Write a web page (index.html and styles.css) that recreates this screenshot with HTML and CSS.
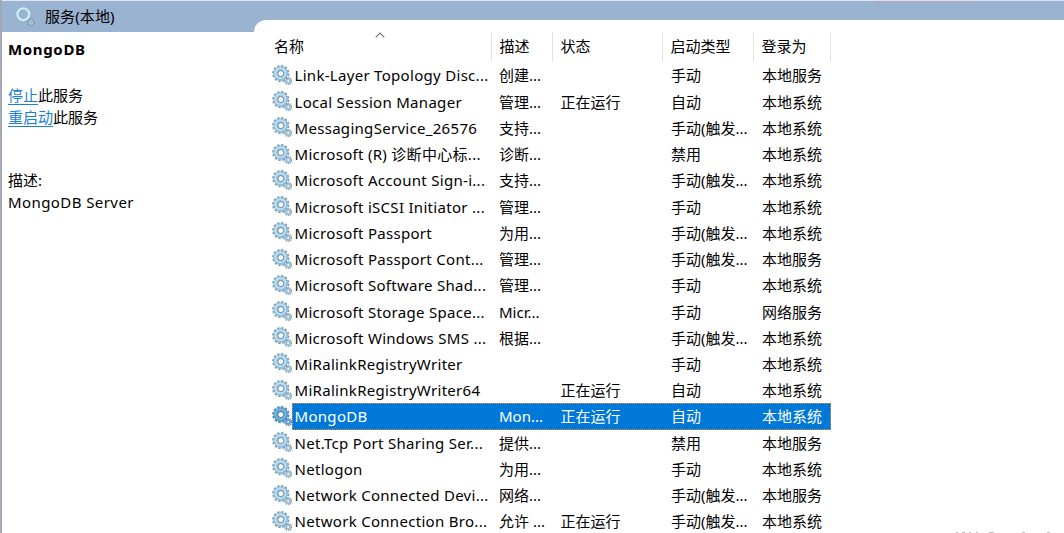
FILE: index.html
```html
<!DOCTYPE html>
<html lang="zh-CN">
<head>
<meta charset="UTF-8">
<meta name="viewport" content="width=device-width, initial-scale=1.0">
<title>服务</title>
<link rel="stylesheet" href="styles.css">
</head>
<body>
<svg class="defs" width="0" height="0">
  <symbol id="gear" viewBox="0 0 20 20">
    <circle class="teeth" cx="8.8" cy="8.6" r="7.6" fill="none" stroke-width="2" stroke-dasharray="2.4 1.58"/>
    <circle class="ring" cx="8.8" cy="8.6" r="5.2" fill="none" stroke-width="4.2"/>
    <circle class="shine" cx="8.4" cy="8.2" r="5" fill="none" stroke-width="1.6"/>
    <circle class="edge" cx="8.8" cy="8.6" r="3" fill="none" stroke-width="1"/>
    <circle class="teeth" cx="16.2" cy="16" r="3.3" fill="none" stroke-width="1.6" stroke-dasharray="1.3 0.77"/>
    <circle class="small" cx="16.2" cy="16" r="1.8" fill="none" stroke-width="1.8"/>
  </symbol>
</svg>

<div class="window">
  <div class="title-bar">
    <svg class="title-icon" viewBox="0 0 20 20">
      <circle cx="8.5" cy="7.5" r="6" fill="none" stroke="#86b4cc" stroke-width="4"/>
      <circle cx="8.3" cy="7.3" r="5.9" fill="none" stroke="#cdeaf5" stroke-width="2.4"/>
      <circle cx="16" cy="15.5" r="3.1" fill="none" stroke="#7f93aa" stroke-width="1.8" stroke-dasharray="1.3 0.9"/>
      <circle cx="16" cy="15.5" r="1.7" fill="none" stroke="#a9cbe0" stroke-width="1.2"/>
    </svg>
    <span>服务(本地)</span>
  </div>
  <div class="content">
    <div class="detail">
      <h2>MongoDB</h2>
      <p class="actions"><a href="#">停止</a>此服务<br><a href="#">重启动</a>此服务</p>
      <p class="description">描述:<br><span class="latin">MongoDB Server</span></p>
    </div>
    <div class="list">
      <div class="list-header">
        <span>名称</span>
        <span>描述</span>
        <span>状态</span>
        <span>启动类型</span>
        <span>登录为</span>
        <svg class="sort" viewBox="0 0 10 6"><path d="M0.7 5.3 L5 1 L9.3 5.3" fill="none" stroke="#777" stroke-width="1.2"/></svg>
      </div>
      <div id="rows"></div>
    </div>
  </div>
</div>
<svg class="specks" viewBox="0 0 100 1">
  <path d="M2 .5h2M8 .5h3M15 .5h2M22 .5h2M35 .5h5M68 .5h3M93 .5h3" stroke="#bbb" stroke-width="1"/>
</svg>

<script>
  // name, description, status, startup type, log on as
  const services = [
    ['Link-Layer Topology Disc...', '创建...', '', '手动', '本地服务'],
    ['Local Session Manager', '管理...', '正在运行', '自动', '本地系统'],
    ['MessagingService_26576', '支持...', '', '手动(触发...', '本地系统'],
    ['Microsoft (R) 诊断中心标...', '诊断...', '', '禁用', '本地系统'],
    ['Microsoft Account Sign-i...', '支持...', '', '手动(触发...', '本地系统'],
    ['Microsoft iSCSI Initiator ...', '管理...', '', '手动', '本地系统'],
    ['Microsoft Passport', '为用...', '', '手动(触发...', '本地系统'],
    ['Microsoft Passport Cont...', '管理...', '', '手动(触发...', '本地服务'],
    ['Microsoft Software Shad...', '管理...', '', '手动', '本地系统'],
    ['Microsoft Storage Space...', 'Micr...', '', '手动', '网络服务'],
    ['Microsoft Windows SMS ...', '根据...', '', '手动(触发...', '本地系统'],
    ['MiRalinkRegistryWriter', '', '', '手动', '本地系统'],
    ['MiRalinkRegistryWriter64', '', '正在运行', '自动', '本地系统'],
    ['MongoDB', 'Mon...', '正在运行', '自动', '本地系统'],
    ['Net.Tcp Port Sharing Ser...', '提供...', '', '禁用', '本地服务'],
    ['Netlogon', '为用...', '', '手动', '本地系统'],
    ['Network Connected Devi...', '网络...', '', '手动(触发...', '本地服务'],
    ['Network Connection Bro...', '允许 ...', '正在运行', '手动(触发...', '本地系统']
  ];

  document.getElementById('rows').innerHTML = services.map(s => `
    <div class="row${s[0] === 'MongoDB' ? ' selected' : ''}">
      <svg class="gear"><use href="#gear"/></svg>
      <div class="cells">${s.map(text => `<span>${text}</span>`).join('')}</div>
    </div>`).join('');
</script>
</body>
</html>
```
FILE: styles.css
```css
body {
  margin: 0;
  background-color: #fff;
  color: #000;
  font-family: "Noto Sans", "Noto Sans CJK SC", sans-serif;
  font-size: 15px;
  overflow: hidden;
}

.defs {
  position: absolute;
}

.window {
  height: 533px;
  border-left: 2px solid #a3a9b5;
  box-sizing: border-box;
  overflow: hidden;
  padding-top: 1px;
  background: linear-gradient(90deg, #dfe6f5 875px, #f8d5d3 875px, #f8d5d3 972px, #d5e0f5 972px) top / 100% 1px no-repeat;
}

.title-bar {
  display: flex;
  align-items: center;
  height: 31px;
  padding-left: 13px;
  background-color: #9ab3d0;
}

.title-icon {
  width: 20px;
  height: 20px;
  margin-right: 10px;
}

.title-bar span {
  margin-top: -3px;
  letter-spacing: 0.1px;
}

.content {
  display: flex;
}

.detail {
  width: 252px;
  padding-left: 6px;
  box-sizing: border-box;
}

.detail h2 {
  margin: 7px 0 0;
  font-size: 15px;
  line-height: 21px;
  letter-spacing: 0.65px;
}

.detail p {
  margin: 0;
  line-height: 21.5px;
}

.detail .actions {
  margin-top: 25px;
}

.detail .description {
  margin-top: 42px;
}

.detail a {
  color: #1a7fdc;
  text-underline-offset: 3px;
}

.latin {
  letter-spacing: 0.42px;
}

.list {
  flex: 1;
  margin-top: -12px;
  padding-top: 12px;
  background-color: #fff;
  border-top-left-radius: 12px;
}

.list-header, .cells {
  display: grid;
  grid-template-columns: 199px 62px 110px 91px 77px;
}

.list-header {
  position: relative;
  width: 577px;
  height: 30px;
  grid-template-columns: 238px 61px 110px 91px 77px;
}

.list-header span {
  padding-left: 7.5px;
  line-height: 29px;
  border-right: 1px solid #e3e3e3;
}

.list-header span:first-child {
  padding-left: 20px;
}

.sort {
  position: absolute;
  left: 121px;
  top: 0;
  width: 10px;
  height: 6px;
}

#rows {
  padding-top: 0.4px;
}

.row {
  display: flex;
  height: 26.24px;
  margin-left: 18px;
}

.gear {
  width: 20px;
  height: 20px;
  margin-top: 2.5px;
}

.cells {
  width: 539px;
  box-sizing: border-box;
  line-height: 26px;
  white-space: nowrap;
}

.cells span {
  padding-left: 8px;
}

.cells span:first-child {
  padding-left: 2.5px;
  letter-spacing: 0.3px;
}

.cells span:nth-child(3) {
  padding-left: 7.5px;
}

.selected .cells {
  background-color: #0078d7;
  color: #fff;
  outline: 1px dotted #e8924a;
  outline-offset: -1px;
}

.teeth {
  stroke: #7d9db5;
}

.ring {
  stroke: #94bfdc;
}

.shine {
  stroke: #c9e3f2;
}

.edge {
  stroke: #6389a5;
}

.small {
  stroke: #9cbdd2;
}

.selected .gear {
  filter: saturate(2.6) hue-rotate(8deg) brightness(0.8);
}

.specks {
  position: absolute;
  left: 954px;
  bottom: 0;
  width: 100px;
  height: 1px;
}
```
